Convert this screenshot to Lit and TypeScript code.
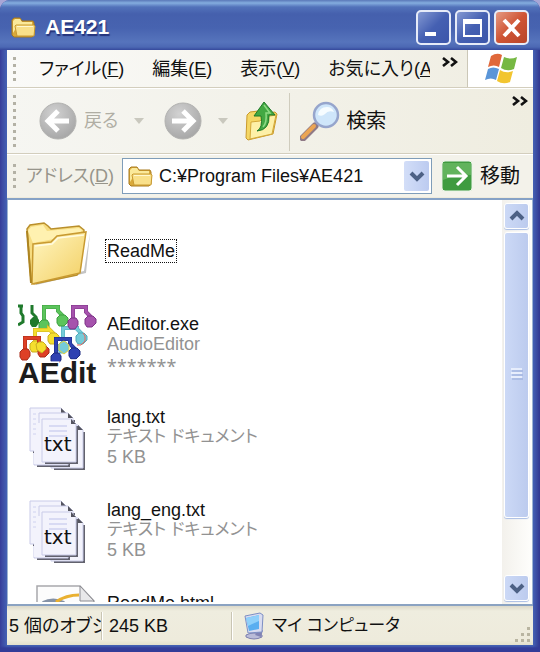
import { LitElement, html, svg, css } from "lit";
import { customElement } from "lit/decorators.js";

const folder = (cls: string) => html`
  <svg class=${cls} viewBox="0 0 26 22" aria-hidden="true">
    <path d="M2 19V4l2-2h6l2 3h11l1 2v12l-2 2H4z" fill="#d9a93a" stroke="#a87a1e" stroke-width="1"/>
    <path d="M3 17V5l2-2h5l2 3h10v3H8z" fill="#fbe99a"/>
    <path d="M6 9h18l1 1-1 10H7L5 10z" fill="#f9e08a" stroke="#c99a30" stroke-width="1"/>
    <path d="M7 10.500h16" stroke="#fff8d0" stroke-width="1"/>
  </svg>`;

const bigFolder = html`
  <svg class="icon" viewBox="0 0 80 80" aria-hidden="true">
    <defs>
      <linearGradient id="ff" x1="0" y1="0" x2="1" y2="1">
        <stop offset="0" stop-color="#fff6c2"/><stop offset="1" stop-color="#f3cf62"/>
      </linearGradient>
    </defs>
    <path d="M16 71l50-11 6-38-4 40-50 12z" fill="#c4c4c4"/>
    <path d="M9 18l3-4 14-2 4 3 3 3 28-3 5 4-4 41-3 4-43 9-3-4z" fill="#f6dc80" stroke="#b98f2c" stroke-width="1.500"/>
    <path d="M10 20l3-4 12-2 4 6 32-3 3 2-2 4-47 9z" fill="#fff1b0"/>
    <path d="M15 33l18-2 6-6 29-4-6 41-48 11z" fill="url(#ff)" stroke="#c89a31" stroke-width="1.500"/>
    <path d="M17 35l17-2 6-6 26-3" fill="none" stroke="#fffbe0" stroke-width="1.500"/>
    <path d="M9 20l4 52" stroke="#ad8420" stroke-width="2"/>
  </svg>`;

const note = (lx: number, ly: number, rx: number, ry: number, top: number, color: string, edge: string) => svg`
  <g fill="none" stroke-linejoin="miter">
    <path d="M${lx} ${ly}V${top + 2}H${rx - 4}V${ry - 9}l4 4V${ry}" stroke=${edge} stroke-width="4"/>
    <path d="M${lx} ${ly}V${top + 2}H${rx - 4}V${ry - 9}l4 4V${ry}" stroke=${color} stroke-width="3"/>
    <path d="M${lx - 5} ${ly - 2}l3-3h5l2 3v4l-3 4h-5l-2-3z" fill=${color} stroke=${edge}/>
    <path d="M${rx - 5} ${ry - 2}l3-3h5l3 3v4l-4 4h-5l-2-3z" fill=${color} stroke=${edge}/>
  </g>`;

const audioIcon = html`
  <svg class="icon" viewBox="0 0 80 80" aria-hidden="true">
    <path d="M0 2h5M3 2v7l2 3v6l-5 3" fill="none" stroke="#1f7a2c" stroke-width="3"/>
    <path d="M14 1v8l4 4v5" fill="none" stroke="#1f7a2c" stroke-width="3"/>
    <path d="M12 16l3-3h4l2 3v3l-3 4h-4l-2-3z" fill="#1f7a2c"/>
    ${note(45, 43, 63, 34, 22, "#76cbd8", "#4fabbb")}
    <path d="M59 41h4l4-4v-5l-2-3" fill="none" stroke="#e8665c"/>
    ${note(26, 21, 44, 16, 1, "#5cc45c", "#3c9f3f")}
    ${note(55, 19, 72, 17, 1, "#a653ad", "#7c3386")}
    ${note(17, 42, 35, 34, 24, "#f5de2e", "#c9ae20")}
    ${note(7, 50, 25, 47, 32, "#de4026", "#a92a18")}
    <path d="M18 40l3-2h4l3 3v4l-4 4-5-3z" fill="#f5de2e" stroke="#c9ae20"/>
    ${note(38, 54, 56, 49, 33, "#2f42b2", "#1c2a80")}
    <path d="M41 40l5-3 5 4v5l-5 4-5-4z" fill="#76cbd8" stroke="#e8d23a"/>
    <text class="aedit" x="0" y="79">AEdit</text>
  </svg>`;

const page = (x: number, y: number, w: number, h: number) => svg`
  <path d="M${x + 3} ${y + h + 1}h${w - 2}V${y + 7}" fill="none" stroke="#62626e" stroke-width="2"/>
  <path d="M${x} ${y}h${w - 5}l5 5v${h - 5}h${-w}z" fill="#f3f3fc" stroke="#c9cbe8" stroke-width="1"/>
  <path d="M${x + w - 5} ${y}v5h5z" fill="#55555f"/>`;

const txtIcon = html`
  <svg class="icon" viewBox="0 0 80 80" aria-hidden="true">
    ${page(33, 28, 32, 43)}
    ${page(16, 26, 34, 42)}
    ${page(12, 11, 36, 43)}
    ${page(21, 16, 34, 44)}
    <path d="M16 26v41h34V58H22V26z" fill="#f3f3fc"/>
    ${page(24, 22, 34, 43)}
    <path d="M31 29h18M31 34h18M31 39h18" stroke="#cfd2f0" stroke-width="1.500"/>
    <path d="M15 17h3M15 22h3M15 27h3M15 32h3M15 37h3" stroke="#cfd2f0"/>
    <text class="txt" x="26" y="54">txt</text>
  </svg>`;

const htmlIcon = html`
  <svg class="icon" viewBox="0 0 80 80" aria-hidden="true">
    <path d="M19 72V3h43l14 15v54z" fill="#fcfcfc" stroke="#a8a8ac" stroke-width="1.500"/>
    <path d="M62 3v15h14z" fill="#e8e8ea" stroke="#8c8c92"/>
    <path d="M25 20q10-5 21 0" fill="none" stroke="#8592a6" stroke-width="4"/>
    <path d="M38 19q10-7 23-7" fill="none" stroke="#e9b030" stroke-width="3"/>
  </svg>`;

const navArrow = (forward: boolean) => html`
  <svg class="nav" viewBox="0 0 38 38" aria-hidden="true">
    <defs><radialGradient id="ng" cx=".4" cy=".3" r=".8">
      <stop offset="0" stop-color="#d2d2d2"/><stop offset="1" stop-color="#a2a2a2"/>
    </radialGradient></defs>
    <circle cx="19" cy="19" r="18" fill="url(#ng)" stroke="#b2b2b0"/>
    <path d=${forward ? "M8 19h20M19 9l10 10-10 10" : "M30 19H10M19 9L9 19l10 10"} fill="none" stroke="#fff" stroke-width="5"/>
  </svg>`;

const more = html`
  <svg class="more" viewBox="0 0 16 10" aria-hidden="true">
    <path d="M1 1l5 4-5 4M9 1l5 4-5 4" fill="none" stroke="#111" stroke-width="2.600"/>
  </svg>`;

const drop = html`
  <svg class="drop" viewBox="0 0 10 6" aria-hidden="true"><path d="M0 0h10L5 6z" fill="#c9c8be"/></svg>`;

const chevron = (up: boolean) => html`
  <svg class="chev" viewBox="0 0 16 12" aria-hidden="true">
    <path d=${up ? "M2 9l6-6 6 6" : "M2 3l6 6 6-6"} fill="none" stroke="#4d6185" stroke-width="4"/>
  </svg>`;

type Line = { text: string; kind?: string };
const files: { icon: unknown; name: string; lines: Line[]; focus?: boolean }[] = [
  { icon: bigFolder, name: "ReadMe", lines: [], focus: true },
  { icon: audioIcon, name: "AEditor.exe", lines: [{ text: "AudioEditor" }, { text: "*******", kind: "stars" }] },
  { icon: txtIcon, name: "lang.txt", lines: [{ text: "テキスト ドキュメント", kind: "kana" }, { text: "5 KB" }] },
  { icon: txtIcon, name: "lang_eng.txt", lines: [{ text: "テキスト ドキュメント", kind: "kana" }, { text: "5 KB" }] },
  { icon: htmlIcon, name: "ReadMe.html", lines: [{ text: "HTML Document" }, { text: "5 KB" }] },
];

@customElement("app-root")
export class AppRoot extends LitElement {
  static styles = css`
    :host { display: block; background: #a9a6d6; }
    * { box-sizing: border-box; }
    button, input {
      font: inherit; color: inherit; border: 0; padding: 0; margin: 0; background: none;
    }
    button { display: flex; align-items: center; flex: none; white-space: nowrap; }
    svg { display: block; flex: none; }
    .window {
      height: 100vh; display: flex; flex-direction: column; overflow: hidden;
      padding: 0 7px 7px; border-radius: 10px 10px 0 0;
      background: linear-gradient(90deg, #39409b 0, #4461b4 7px, #4461b4 calc(100% - 7px), #33388f 100%);
      box-shadow: inset 0 -5px 2px #333c98;
      font: 18px/20px "Liberation Sans", "Noto Sans CJK JP", sans-serif;
      font-feature-settings: "palt"; color: #111;
    }
    .title {
      flex: none; height: 50px; margin: 0 -7px; padding: 4px 11px 0 10px;
      display: flex; align-items: center; gap: 9px;
      background: linear-gradient(#5a78b8 0, #84addf 3px, #5272ba 7px, #4560ad 14px, #4763b0 28px, #5674bc 42px, #4c68b4 47px, #35499c 50px);
    }
    .title h1 {
      flex: 1; margin: 0; font-size: 21px; line-height: 24px; font-weight: 700;
      color: #fff; text-shadow: 1px 2px 1px #24337c;
    }
    .controls { display: flex; gap: 4px; }
    .control {
      width: 35px; height: 35px; border: 2px solid #e6ebf8; border-radius: 5px;
      background: linear-gradient(135deg, #8398d2, #4560b2 50%, #3c56aa);
    }
    .close { background: linear-gradient(135deg, #e59a83, #cf5434 50%, #b8452a); }
    .control svg { width: 31px; height: 31px; }
    .small { width: 26px; height: 22px; }
    .bar { flex: none; display: flex; align-items: center; background: #f3f2ea; }
    .grip { flex: none; width: 3px; margin-left: 6px; background: repeating-linear-gradient(#b3b1a5 0 3px, transparent 3px 7px); }
    .menu { height: 38px; background: linear-gradient(90deg, #fafaf8, #efede1); border-bottom: 1px solid #d3cebd; }
    .menu .grip { height: 24px; }
    .items { flex: 1; min-width: 0; display: flex; gap: 28px; padding-left: 23px; overflow: hidden; }
    .more { width: 16px; height: 10px; }
    .menu .overflow { align-self: flex-start; margin: 7px 9px 0 12px; }
    .flag { align-self: stretch; width: 66px; display: grid; place-items: center; background: #fff; border-left: 1px solid #cbc7b7; }
    .flag svg { width: 34px; height: 32px; }
    .tools { height: 66px; border-top: 1px solid #fff; border-bottom: 1px solid #d3cebd; background: linear-gradient(90deg, #f6f6f2, #efede0); }
    .tools .grip { height: 52px; }
    .back { margin-left: 23px; gap: 7px; color: #b0aea4; }
    .nav { width: 38px; height: 38px; }
    .drop { width: 10px; height: 6px; margin-left: 16px; }
    .forward { margin-left: 20px; }
    .up { margin-left: 17px; }
    .up svg { width: 34px; height: 40px; }
    .rule { align-self: stretch; width: 1px; margin: 4px 10px 2px; background: #cfccbd; }
    .search { gap: 6px; }
    .big { font-size: 20px; }
    .search svg { width: 40px; height: 40px; }
    .tools .overflow { align-self: flex-start; margin: 7px 5px 0 auto; }
    .address { height: 43px; border-top: 1px solid #fff; }
    .address .grip { height: 24px; }
    .address label { margin: 0 8px 0 10px; flex: none; color: #97958b; white-space: nowrap; }
    .combo {
      flex: 1; min-width: 0; height: 36px; display: flex; align-items: center; gap: 6px;
      padding: 0 2px 0 4px; border: 1px solid #7f9db9; background: #fff;
    }
    .combo input { flex: 1; min-width: 0; height: 32px; outline: 0; }
    .pick { width: 25px; height: 30px; justify-content: center; border-radius: 2px; background: linear-gradient(90deg, #d3def8, #bccbf0); }
    .chev { width: 16px; height: 12px; }
    .go { gap: 7px; margin: 0 13px 0 9px; }
    .go svg { width: 32px; height: 32px; }
    .edge { flex: none; height: 3px; background: #efebdc; border-bottom: 2px solid #86a2c6; }
    .body {
      flex: 1; min-height: 0; display: flex; background: #fff; border: solid #9db3d2;
      border-width: 0 1px;
    }
    .files { flex: 1; min-width: 0; margin: 4px 0 2px; padding: 0 0 0 10px; list-style: none; overflow: hidden; }
    .file { height: 93px; display: flex; align-items: center; gap: 9px; white-space: nowrap; }
    .icon { width: 80px; height: 80px; }
    .name, .info { display: block; }
    .info { color: #929292; height: 20px; }
    .kana { font-size: 17px; }
    .stars { font-family: "Noto Sans", sans-serif; line-height: 24px; }
    .focus { outline: 1px dotted #111; outline-offset: 1px; }
    .aedit { font: 700 30px "Liberation Sans", sans-serif; fill: #1c1c1c; stroke: #fff; stroke-width: 3px; paint-order: stroke; }
    .txt { font: 20px "DejaVu Sans", sans-serif; fill: #111; }
    .scroll { flex: none; width: 30px; display: flex; flex-direction: column; gap: 3px; padding: 3px 3px 3px 2px; background: linear-gradient(90deg, #f3f1ec, #fefefc); }
    .arrow, .thumb { width: 25px; border: 1px solid #fff; border-radius: 3px; background: linear-gradient(90deg, #ccd9f6, #bccbee); box-shadow: 0 1px 1px #a9bde4; }
    .arrow { height: 26px; justify-content: center; }
    .track { flex: 1; min-height: 0; }
    .thumb { height: 84%; display: grid; place-items: center; }
    .thumb svg { width: 12px; height: 13px; }
    .status { flex: none; height: 41px; display: flex; align-items: center; border-top: 2px solid #8ba3c2; background: linear-gradient(#dcd9c9, #efeddf 5px, #eeebdc 34px, #e2dfcc); }
    .cell { flex: none; white-space: nowrap; overflow: hidden; border-right: 1px solid #c9c5b4; box-shadow: 1px 0 #fff; line-height: 28px; }
    .count { width: 95px; padding-left: 2px; }
    .size { width: 130px; padding-left: 7px; }
    .place { flex: 1; min-width: 0; display: flex; align-items: center; gap: 7px; padding-left: 11px; white-space: nowrap; }
    .place svg { width: 22px; height: 28px; }
    .corner { align-self: flex-end; width: 20px; height: 20px; }
  `;

  render() {
    return html`
      <main class="window">
        <header class="title">
          ${folder("small")}
          <h1>AE421</h1>
          <div class="controls">
            <button class="control" aria-label="最小化"><svg viewBox="0 0 31 31"><path d="M7 20h11v4H7z" fill="#fff"/></svg></button>
            <button class="control" aria-label="最大化"><svg viewBox="0 0 31 31"><path d="M7 10h17v14H7z" fill="none" stroke="#fff" stroke-width="2"/><path d="M6 7h19v5H6z" fill="#fff"/></svg></button>
            <button class="control close" aria-label="閉じる"><svg viewBox="0 0 31 31"><path d="M8 8l15 16M23 8L8 24" stroke="#fff" stroke-width="4"/></svg></button>
          </div>
        </header>

        <nav class="bar menu">
          <span class="grip"></span>
          <div class="items">
            <button><span>ファイル(<u>F</u>)</span></button>
            <button><span>編集(<u>E</u>)</span></button>
            <button><span>表示(<u>V</u>)</span></button>
            <button><span>お気に入り(<u>A</u>)</span></button>
          </div>
          <button class="overflow" aria-label="その他のメニュー">${more}</button>
          <span class="flag">
            <svg viewBox="0 0 34 32" aria-hidden="true">
              <path d="M7 3q6-4 11-1l-3 12q-5-3-11 0z" fill="#e0683a"/>
              <path d="M20 4q6 3 13 0l-3 12q-7 3-13-1z" fill="#76b843"/>
              <path d="M4 16q5-3 11 0l-3 11q-5-3-11 0z" fill="#5a95d8"/>
              <path d="M16 17q6 4 13 1l-3 11q-7 3-13-1z" fill="#f2c530"/>
            </svg>
          </span>
        </nav>

        <div class="bar tools">
          <span class="grip"></span>
          <button class="back" disabled>${navArrow(false)}<span>戻る</span></button>
          ${drop}
          <button class="forward" disabled aria-label="進む">${navArrow(true)}</button>
          ${drop}
          <button class="up" aria-label="上へ">
            <svg viewBox="0 0 34 40">
              <path d="M2 14l3-3 8-1 3 3 14-2 2 2-4 20-25 6-2-2z" fill="#f5d765" stroke="#c99a2c"/>
              <path d="M6 21l9-1 4-4 12-2-4 19-22 5z" fill="#fdf0a8" stroke="#d3a83a"/>
              <path d="M12 30q6-3 4-15h-7L19 1l11 13h-6q1 15-12 16z" fill="#43a843" stroke="#1f7a28"/>
              <path d="M19 4l6 8h-4q1 10-3 14" fill="none" stroke="#8fda84" stroke-width="1.500"/>
            </svg>
          </button>
          <span class="rule"></span>
          <button class="search">
            <svg viewBox="0 0 40 40" aria-hidden="true">
              <path d="M3 37L15 25" stroke="#8f7a86" stroke-width="7" stroke-linecap="round"/>
              <path d="M3 36L14 25" stroke="#eba553" stroke-width="4" stroke-linecap="round"/>
              <circle cx="26" cy="14" r="12" fill="#cfe6fa" stroke="#96a5cc" stroke-width="2.500"/>
              <path d="M18 14q1-8 9-8 5 0 7 5-6-2-9 2-3 3-7 1z" fill="#f6fcff"/>
            </svg>
            <span class="big">検索</span>
          </button>
          <button class="overflow" aria-label="その他のボタン">${more}</button>
        </div>

        <div class="bar address">
          <span class="grip"></span>
          <label for="path">アドレス(<u>D</u>)</label>
          <div class="combo">
            ${folder("small")}
            <input id="path" type="text" .value=${"C:¥Program Files¥AE421"} />
            <button class="pick" aria-label="履歴">${chevron(false)}</button>
          </div>
          <button class="go">
            <svg viewBox="0 0 32 32" aria-hidden="true">
              <rect x="1" y="1" width="30" height="30" rx="3" fill="#3f9b40" stroke="#e9f3e6"/>
              <path d="M2 3h28v12Q16 14 2 20z" fill="#61b35c"/>
              <path d="M6 16h19M16 7l9 9-9 9" fill="none" stroke="#fff" stroke-width="3"/>
            </svg>
            <span class="big">移動</span>
          </button>
        </div>
        <div class="edge"></div>

        <section class="body">
          <ul class="files">
            ${files.map((f) => html`
              <li class="file">
                ${f.icon}
                <div>
                  <span class="name ${f.focus ? "focus" : ""}">${f.name}</span>
                  ${f.lines.map((l) => html`<span class="info ${l.kind ?? ""}">${l.text}</span>`)}
                </div>
              </li>`)}
          </ul>
          <div class="scroll">
            <button class="arrow" aria-label="上にスクロール">${chevron(true)}</button>
            <div class="track">
              <div class="thumb">
                <svg viewBox="0 0 12 13" aria-hidden="true">
                  <path d="M0 1h11M0 5h11M0 9h11" stroke="#f2f6ff" stroke-width="1.500"/>
                  <path d="M1 3h11M1 7h11M1 11h11" stroke="#94a8d8"/>
                </svg>
              </div>
            </div>
            <button class="arrow" aria-label="下にスクロール">${chevron(false)}</button>
          </div>
        </section>

        <footer class="status">
          <span class="cell count">5 個のオブジェクト</span>
          <span class="cell size">245 KB</span>
          <span class="place">
            <svg viewBox="0 0 22 28" aria-hidden="true">
              <path d="M3 23q8-4 16 0v2q-8 4-16 0z" fill="#b9bbd8" stroke="#7c7fae"/>
              <path d="M15 19l5-1-2 7-6-2z" fill="#8083b4"/>
              <path d="M2 4l15-3 3 2-1 17-14 1z" fill="#d9dcf0" stroke="#7d8fc4"/>
              <path d="M3 6l13-3v14l-10 2z" fill="#5aaef0"/>
              <path d="M3 6l13-3v6L5 14z" fill="#8fd0fa"/>
            </svg>
            <span class="kana">マイ コンピュータ</span>
          </span>
          <svg class="corner" viewBox="0 0 20 20" aria-hidden="true">
            <path d="M14 2h3v3h-3zM14 8h3v3h-3zM14 14h3v3h-3zM8 8h3v3H8zM8 14h3v3H8zM2 14h3v3H2z" fill="#b9b5a1"/>
          </svg>
        </footer>
      </main>`;
  }
}
